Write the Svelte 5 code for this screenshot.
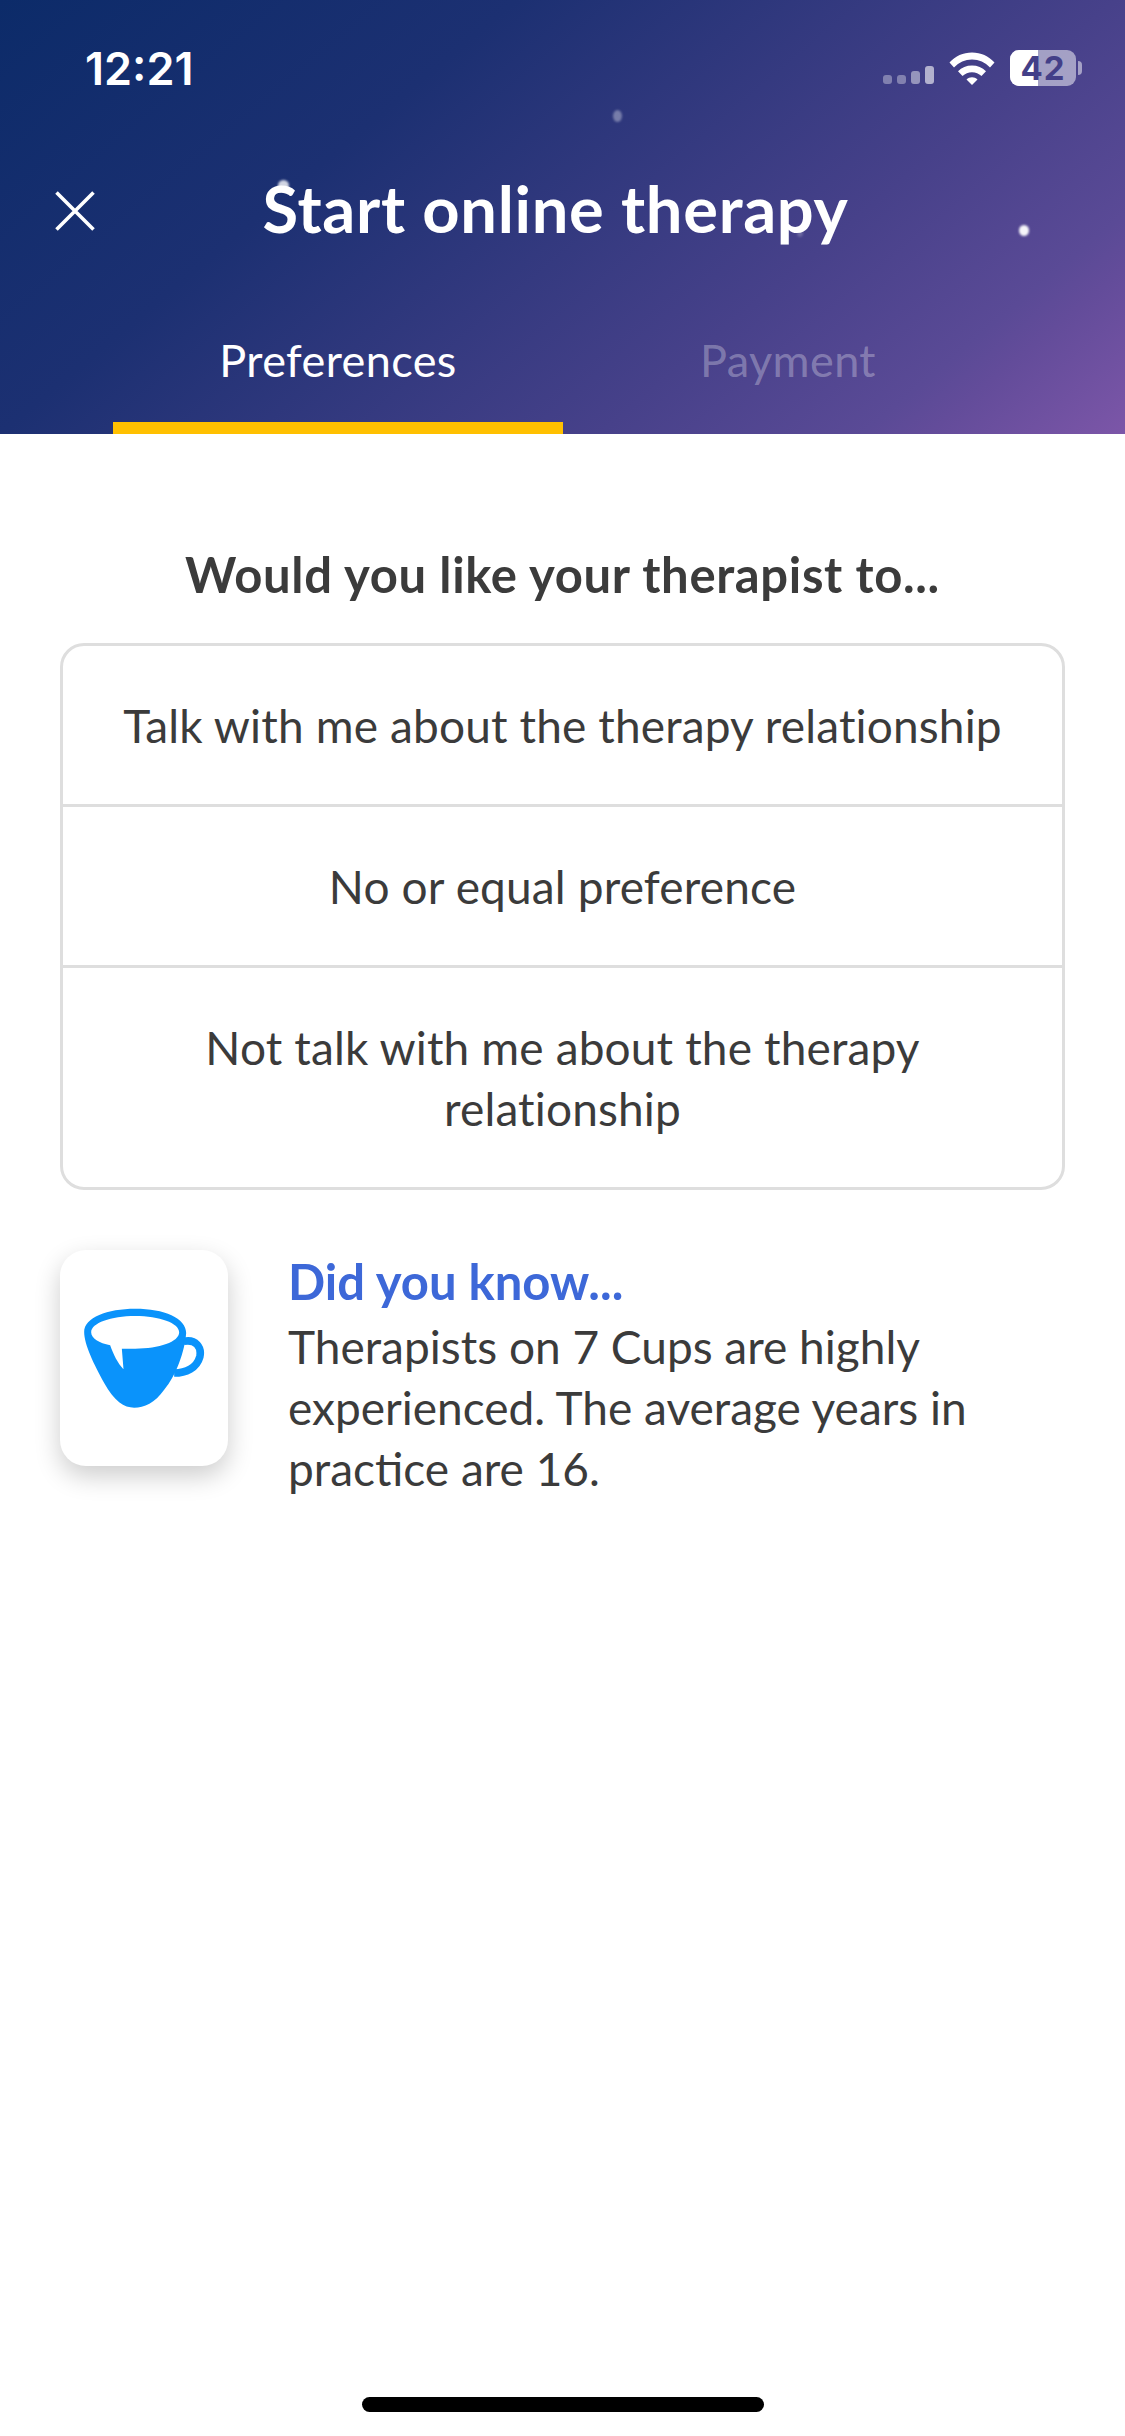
<script>
  const options = [
    "Talk with me about the therapy relationship",
    "No or equal preference",
    "Not talk with me about the therapy relationship"
  ];
  const stars = [
    { x: 617, y: 116, w: 9, h: 12, o: 0.35 },
    { x: 1024, y: 230, w: 10, h: 11, o: 0.95 },
    { x: 283, y: 185, w: 11, h: 11, o: 0.8 },
    { x: 800, y: 233, w: 6, h: 8, o: 0.2 }
  ];
</script>

<div class="page">
  <header class="header">
    {#each stars as s}
      <span class="star" style="left:{s.x - s.w / 2}px;top:{s.y - s.h / 2}px;width:{s.w}px;height:{s.h}px;opacity:{s.o}"></span>
    {/each}

    <div class="status">
      <span class="time">12:21</span>
      <div class="status-icons">
        <div class="signal">
          <i class="b1"></i><i class="b1"></i><i class="b2"></i><i class="b3"></i>
        </div>
        <svg class="wifi" viewBox="0 0 46 33" width="46" height="33">
          <path fill="#fff" d="M0.5 10.5 C6.5 4 14 0.5 23 0.5 C32 0.5 39.5 4 45.5 10.5 L41 15.5 C36 10.2 30 7.4 23 7.4 C16 7.4 10 10.2 5 15.5 Z" />
          <path fill="#fff" d="M9 19.3 C12.7 15.5 17.5 13.5 23 13.5 C28.5 13.5 33.3 15.5 37 19.3 L32.5 24 C29.8 21.5 26.7 20.2 23 20.2 C19.3 20.2 16.2 21.5 13.5 24 Z" />
          <path fill="#fff" d="M17.5 27.5 C19 26 21 25.3 23 25.3 C25 25.3 27 26 28.5 27.5 L23 33 Z" />
        </svg>
        <div class="battery">
          <div class="level"></div>
          <span class="pct">42</span>
        </div>
        <span class="nub"></span>
      </div>
    </div>

    <div class="nav">
      <button class="close" aria-label="Close">
        <svg viewBox="0 0 40 40" width="40" height="40">
          <path d="M1.5 1.5 L38.5 38.5 M38.5 1.5 L1.5 38.5" stroke="#fff" stroke-width="3.6" fill="none" />
        </svg>
      </button>
      <h1>Start online therapy</h1>
    </div>

    <div class="tabs">
      <div class="tab active">Preferences</div>
      <div class="tab">Payment</div>
    </div>
  </header>

  <main class="content">
    <h2>Would you like your therapist to...</h2>

    <div class="options">
      {#each options as option}
        <div class="option">{option}</div>
      {/each}
    </div>

    <div class="tip">
      <div class="tip-card">
        <svg viewBox="0 0 362 300" width="121" height="100">
          <path
            fill="#0a93fb"
            fill-rule="evenodd"
            d="M0 72 C0 28 70 2 153 2 C240 2 306 30 306 75 C302 130 275 205 240 245 C212 285 180 299 150 299 C120 299 90 280 60 225 C30 170 0 110 0 72 Z M21 73 C21 92 45 105 78 112 C88 140 100 165 118 184 L113 122 L153 122 C225 122 285 102 285 73 C285 45 226 24 153 24 C80 24 21 45 21 73 Z"
          />
          <path d="M298 100 C335 92 353 118 347 146 C338 180 305 195 270 195" fill="none" stroke="#0a93fb" stroke-width="23" />
        </svg>
      </div>
      <div class="tip-text">
        <div class="tip-title">Did you know...</div>
        <p>Therapists on 7 Cups are highly experienced. The average years in practice are 16.</p>
      </div>
    </div>
  </main>

  <div class="home-bar"></div>
</div>

<style>
  :global(body) {
    margin: 0;
    background: #fff;
  }
  .page {
    width: 1125px;
    height: 2436px;
    display: flex;
    flex-direction: column;
    font-family: Lato, "Noto Sans", sans-serif;
    color: #3b3b3b;
    overflow: hidden;
  }
  .header {
    position: relative;
    height: 434px;
    flex: none;
    display: flex;
    flex-direction: column;
    background: linear-gradient(140deg, #0c2b69 0%, #1c3072 31.5%, #47418a 68%, #5a4a96 84%, #634c9a 88%, #7c56a8 100%);
  }
  .star {
    position: absolute;
    background: #fff;
    border-radius: 50%;
    filter: blur(1px);
  }
  .status {
    height: 136px;
    flex: none;
    display: flex;
    justify-content: space-between;
    align-items: flex-start;
    padding: 47px 43px 0 85px;
    box-sizing: border-box;
  }
  .time {
    font-family: Inter, sans-serif;
    font-weight: 600;
    font-size: 45px;
    line-height: 44px;
    color: #fff;
  }
  .status-icons {
    display: flex;
    align-items: flex-start;
    margin-top: 3px;
  }
  .signal {
    display: flex;
    align-items: flex-end;
    gap: 5px;
    height: 18px;
    margin: 16px 15px 0 0;
  }
  .signal i {
    width: 9px;
    border-radius: 3px;
    background: rgba(255, 255, 255, 0.35);
  }
  .signal .b1 {
    height: 9px;
  }
  .signal .b2 {
    height: 13px;
    background: rgba(255, 255, 255, 0.45);
  }
  .signal .b3 {
    height: 18px;
    background: rgba(255, 255, 255, 0.6);
  }
  .wifi {
    margin: 2px 15px 0 0;
  }
  .battery {
    position: relative;
    width: 66px;
    height: 36px;
    border-radius: 9px;
    background: rgba(255, 255, 255, 0.5);
    display: flex;
    align-items: center;
    justify-content: center;
  }
  .level {
    position: absolute;
    left: 0;
    top: 0;
    bottom: 0;
    width: 42%;
    border-radius: 9px 0 0 9px;
    background: #fff;
  }
  .pct {
    position: relative;
    font-family: Inter, sans-serif;
    font-weight: 700;
    font-size: 33px;
    line-height: 36px;
    letter-spacing: 1px;
    color: #433f88;
  }
  .nub {
    width: 4px;
    height: 14px;
    margin: 11px 0 0 2px;
    border-radius: 0 4px 4px 0;
    background: rgba(255, 255, 255, 0.5);
  }
  .nav {
    position: relative;
    height: 150px;
    flex: none;
    display: flex;
    align-items: center;
    justify-content: center;
    padding: 0 14px 6px 0;
    box-sizing: border-box;
  }
  .close {
    position: absolute;
    left: 55px;
    top: 55px;
    padding: 0;
    border: none;
    background: none;
    line-height: 0;
  }
  h1 {
    margin: 0;
    font-size: 65px;
    font-weight: 700;
    letter-spacing: 0.7px;
    color: #fff;
  }
  .tabs {
    flex: 1;
    display: grid;
    grid-template-columns: 450px 450px;
    padding-left: 113px;
  }
  .tab {
    font-size: 45px;
    letter-spacing: 0.4px;
    color: rgba(255, 255, 255, 0.3);
    text-align: center;
    padding-top: 47px;
    box-sizing: border-box;
  }
  .tab.active {
    color: #fff;
    border-bottom: 12px solid #ffc000;
  }
  .content {
    padding: 110px 60px 0;
  }
  h2 {
    margin: 0 0 38px;
    font-size: 49px;
    line-height: 61px;
    font-weight: 700;
    letter-spacing: 0.65px;
    text-align: center;
    color: #3b3b3b;
  }
  .options {
    border: 3px solid #dedede;
    border-radius: 24px;
  }
  .option {
    padding: 48.5px 60px;
    font-size: 46px;
    line-height: 61px;
    letter-spacing: 0.15px;
    text-align: center;
  }
  .option + .option {
    border-top: 3px solid #dedede;
  }
  .tip {
    display: flex;
    gap: 60px;
    margin-top: 60px;
  }
  .tip-card {
    flex: none;
    width: 168px;
    height: 216px;
    border-radius: 26px;
    background: #fff;
    box-shadow: 0 10px 26px rgba(0, 0, 0, 0.2);
    display: flex;
    align-items: center;
    justify-content: center;
  }
  .tip-text {
    padding-top: 1px;
    font-size: 46px;
    line-height: 61px;
  }
  .tip-title {
    font-size: 49px;
    font-weight: 700;
    color: #3d68d8;
    margin-bottom: 4px;
  }
  .tip-text p {
    margin: 0;
  }
  .home-bar {
    width: 402px;
    height: 15px;
    flex: none;
    margin: auto auto 24px;
    border-radius: 8px;
    background: #000;
  }
</style>
